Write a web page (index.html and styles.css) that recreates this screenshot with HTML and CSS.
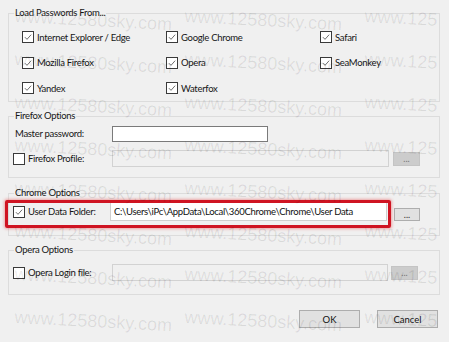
FILE: index.html
```html
<!DOCTYPE html>
<html lang="en">
<head>
    <meta charset="UTF-8">
    <title>Options</title>
    <link rel="stylesheet" href="styles.css">
</head>
<body>
    <div class="dialog">
        <fieldset class="group group-load">
            <legend>Load Passwords From...</legend>
            <div class="browsers">
                <label class="check"><span class="box on"><svg viewBox="0 0 12 12"><path d="M2.3 6.2 L4.8 8.8 L9.8 3.2"/></svg></span>Internet Explorer / Edge</label>
                <label class="check"><span class="box on"><svg viewBox="0 0 12 12"><path d="M2.3 6.2 L4.8 8.8 L9.8 3.2"/></svg></span>Google Chrome</label>
                <label class="check"><span class="box on"><svg viewBox="0 0 12 12"><path d="M2.3 6.2 L4.8 8.8 L9.8 3.2"/></svg></span>Safari</label>
                <label class="check"><span class="box on"><svg viewBox="0 0 12 12"><path d="M2.3 6.2 L4.8 8.8 L9.8 3.2"/></svg></span>Mozilla Firefox</label>
                <label class="check"><span class="box on"><svg viewBox="0 0 12 12"><path d="M2.3 6.2 L4.8 8.8 L9.8 3.2"/></svg></span>Opera</label>
                <label class="check"><span class="box on"><svg viewBox="0 0 12 12"><path d="M2.3 6.2 L4.8 8.8 L9.8 3.2"/></svg></span>SeaMonkey</label>
                <label class="check"><span class="box on"><svg viewBox="0 0 12 12"><path d="M2.3 6.2 L4.8 8.8 L9.8 3.2"/></svg></span>Yandex</label>
                <label class="check"><span class="box on"><svg viewBox="0 0 12 12"><path d="M2.3 6.2 L4.8 8.8 L9.8 3.2"/></svg></span>Waterfox</label>
            </div>
        </fieldset>

        <fieldset class="group group-firefox">
            <legend>Firefox Options</legend>
            <div class="row">
                <span class="row-label plain">Master password:</span>
                <input type="text" class="field field-master">
            </div>
            <div class="row row-second">
                <label class="row-label check"><span class="box"></span>Firefox Profile:</label>
                <input type="text" class="field field-wide" disabled>
                <button class="dots dots-off" disabled>...</button>
            </div>
        </fieldset>

        <fieldset class="group group-chrome">
            <legend>Chrome Options</legend>
            <div class="row row-chrome">
                <label class="row-label check label-chrome"><span class="box on"><svg viewBox="0 0 12 12"><path d="M2.3 6.2 L4.8 8.8 L9.8 3.2"/></svg></span>User Data Folder:</label>
                <input type="text" class="field field-path" value="C:\Users\iPc\AppData\Local\360Chrome\Chrome\User Data" readonly>
                <button class="dots dots-on">...</button>
                <div class="highlight"></div>
            </div>
        </fieldset>

        <fieldset class="group group-opera">
            <legend>Opera Options</legend>
            <div class="row">
                <label class="row-label check"><span class="box"></span>Opera Login file:</label>
                <input type="text" class="field field-opera" disabled>
                <button class="dots dots-off dots-opera" disabled>...</button>
            </div>
        </fieldset>

        <div class="actions">
            <button class="btn">OK</button>
            <button class="btn">Cancel</button>
        </div>
    </div>

    <div class="watermark">
        <span>www.12580sky.com</span><span>www.12580sky.com</span><span>www.125</span>
        <span>www.12580sky.com</span><span>www.12580sky.com</span><span>www.125</span>
        <span>www.12580sky.com</span><span>www.12580sky.com</span><span>www.125</span>
        <span>www.12580sky.com</span><span>www.12580sky.com</span><span>www.125</span>
        <span>www.12580sky.com</span><span>www.12580sky.com</span><span>www.125</span>
        <span>www.12580sky.com</span><span>www.12580sky.com</span><span>www.125</span>
        <span>www.12580sky.com</span><span>www.12580sky.com</span><span>www.125</span>
        <span>www.12580sky.com</span><span>www.12580sky.com</span><span>www.125</span>
    </div>
</body>
</html>
```

FILE: styles.css
```css
* {
    margin: 0;
    padding: 0;
    box-sizing: border-box;
}

body {
    position: relative;
    width: 449px;
    height: 342px;
    overflow: hidden;
    background: #f0f0f0;
    font-family: Lato, 'Segoe UI', sans-serif;
    font-size: 9.5px;
    letter-spacing: -0.3px;
    color: #161616;
}

.dialog {
    padding: 0 9px 0 8px;
}

/* group boxes */
.group {
    border: 1px solid #dcdcdc;
    padding: 3px 19px 0 4px;
    min-width: 0;
}

.group legend {
    line-height: 12px;
    padding: 0 1px;
    margin-left: 1px;
}

.group-load {
    margin-top: 7px;
    padding-top: 11px;
    padding-bottom: 6px;
}

.group-firefox {
    margin-top: 8px;
    padding-bottom: 10px;
}

.group-chrome {
    margin-top: 9px;
    padding-bottom: 14px;
}

.group-opera {
    margin-top: 8px;
    padding-top: 8px;
    padding-bottom: 13px;
}

.browsers {
    display: grid;
    grid-template-columns: 144px 154px auto;
    grid-auto-rows: 14px;
    row-gap: 11.5px;
    margin-left: 9px;
}

/* checkboxes */
.check {
    display: flex;
    align-items: center;
    gap: 3px;
    white-space: nowrap;
}

.box {
    flex: none;
    width: 12px;
    height: 12px;
    border: 1px solid #3a3a3a;
    background: #fff;
}

.box svg {
    display: block;
    width: 10px;
    height: 10px;
}

.box path {
    fill: none;
    stroke: #505050;
    stroke-width: 1;
}

/* option rows */
.row {
    position: relative;
    display: flex;
    align-items: center;
    height: 17px;
}

.row-second {
    margin-top: 8px;
}

.row-label {
    flex: none;
    width: 99px;
}

.row-label.plain {
    padding-left: 2px;
}

.label-chrome {
    width: 97px;
}

.field {
    height: 17px;
    border: 1px solid #7a7a7a;
    background: #fff;
    font-family: inherit;
    font-size: 9.5px;
    letter-spacing: -0.3px;
    color: #111;
    padding: 0 3px;
    outline: none;
}

.field:disabled {
    background: #f0f0f0;
    border-color: #d2d2d2;
}

.field-master {
    width: 156px;
    height: 16px;
}

.field-wide {
    width: 277px;
}

.row-chrome {
    height: 19px;
}

.field-path {
    width: 277px;
    height: 19px;
    border-color: #cfcfcf;
}

.field-opera {
    width: 276px;
}

.dots {
    flex: none;
    width: 27px;
    height: 14px;
    margin-left: 4px;
    font-family: inherit;
    font-size: 9px;
    line-height: 8px;
    letter-spacing: 0;
    border: 1px solid #adadad;
    background: #e1e1e1;
    color: #333;
}

.dots-off {
    background: #cccccc;
    border-color: #c4c4c4;
    color: #777;
}

.dots-on {
    width: 26px;
    height: 13px;
    margin-left: 7px;
    margin-top: 6px;
}

.dots-opera {
    margin-left: 3px;
}

/* red annotation frame drawn over the chrome row */
.highlight {
    position: absolute;
    left: -8px;
    top: -2px;
    width: 386px;
    height: 28px;
    border: 3px solid #cf1422;
    border-radius: 2px;
    box-shadow: 0 0 3px 1px rgba(230, 70, 70, 0.45);
    pointer-events: none;
}

.actions {
    display: flex;
    justify-content: flex-end;
    gap: 17px;
    margin-top: 15px;
    padding-right: 2px;
}

.btn {
    width: 61px;
    height: 18px;
    border: 1px solid #adadad;
    background: #e1e1e1;
    font-family: inherit;
    font-size: 9.5px;
    color: #111;
}

/* faint site watermark over everything */
.watermark {
    position: absolute;
    inset: 0;
    display: grid;
    grid-template-columns: 170px 180px 84px;
    grid-auto-rows: 43px;
    padding: 6px 0 0 15px;
    pointer-events: none;
    overflow: hidden;
}

.watermark span {
    font-family: 'Liberation Sans', sans-serif;
    font-size: 18px;
    letter-spacing: 0;
    color: rgba(0, 0, 0, 0.09);
    white-space: nowrap;
    transform: rotate(3deg);
    transform-origin: left top;
}
```
